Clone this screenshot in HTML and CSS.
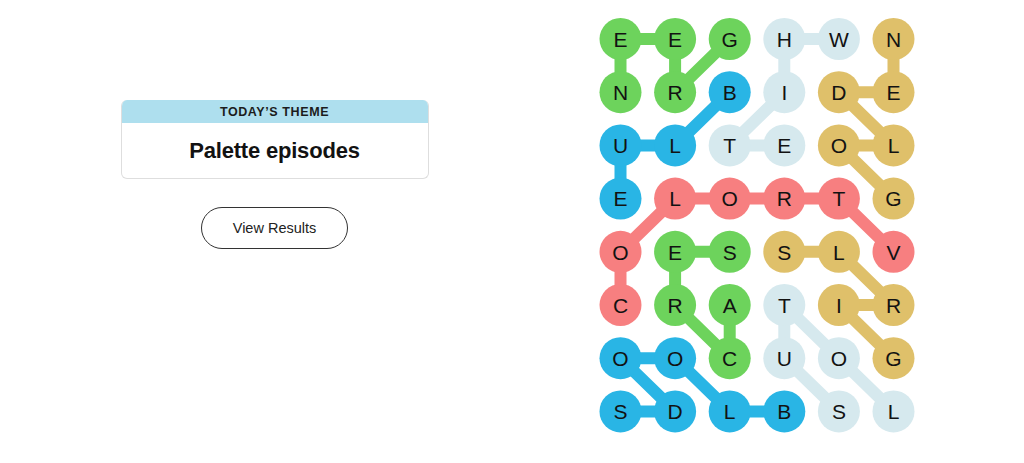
FILE: index.html
```html
<!Doctype html>
<html lang="en">
<head>
	<meta charset="utf-8">
	<title>Strands</title>
	<link rel="stylesheet" href="styles.css">
</head>
<body>
	<div id="page">
		<div id="summary">
			<div class="theme-card">
				<div class="theme-head">TODAY&rsquo;S THEME</div>
				<div class="theme-body">Palette episodes</div>
			</div>
			<button class="results-btn">View Results</button>
		</div>

		<svg id="board" width="340" height="463" viewBox="0 0 340 463"></svg>
	</div>

	<script>

var Board = {
	letters : [
		"EEGHWN",
		"NRBIDE",
		"ULTEOL",
		"ELORTG",
		"OESSLV",
		"CRATIR",
		"OOCUOG",
		"SDLBSL"
	],
	x0 : 30.5, y0 : 39,
	dx : 54.6, dy : 53.2,
	radius : 21
};

var colors = {
	green : "#6dd35c",
	blue : "#29b5e5",
	pale : "#d6e9ee",
	gold : "#dfc06a",
	red : "#f77f80"
};

// each found word, as the cells it runs through
var words = [
	{ color : "green", cells : [[0,2],[1,1],[0,1],[0,0],[1,0]] },
	{ color : "blue",  cells : [[1,2],[2,1],[2,0],[3,0]] },
	{ color : "pale",  cells : [[0,4],[0,3],[1,3],[2,2],[2,3]] },
	{ color : "gold",  cells : [[3,5],[2,4],[2,5],[1,4],[1,5],[0,5]] },
	{ color : "red",   cells : [[5,0],[4,0],[3,1],[3,2],[3,3],[3,4],[4,5]] },
	{ color : "green", cells : [[5,2],[6,2],[5,1],[4,1],[4,2]] },
	{ color : "gold",  cells : [[6,5],[5,4],[5,5],[4,4],[4,3]] },
	{ color : "blue",  cells : [[7,3],[7,2],[6,1],[6,0],[7,1],[7,0]] },
	{ color : "pale",  cells : [[7,5],[6,4],[5,3],[6,3],[7,4]] }
];

var NS = "http://www.w3.org/2000/svg";

function cx(col) { return Board.x0 + col * Board.dx; }
function cy(row) { return Board.y0 + row * Board.dy; }

function el(name, attrs) {
	var node = document.createElementNS(NS, name);
	for (var k in attrs) {
		node.setAttribute(k, attrs[k]);
	}
	return node;
}

function drawBoard() {
	var svg = document.getElementById("board");
	var lines = el("g", {});
	var dots = el("g", {});
	svg.appendChild(lines);
	svg.appendChild(dots);

	words.forEach(function(w) {
		var pts = w.cells.map(function(c) {
			return cx(c[1]) + "," + cy(c[0]);
		}).join(" ");

		lines.appendChild(el("polyline", {
			points : pts, fill : "none", stroke : colors[w.color],
			"stroke-width" : 12, "stroke-linejoin" : "round"
		}));

		w.cells.forEach(function(c) {
			dots.appendChild(el("circle", {
				cx : cx(c[1]), cy : cy(c[0]), r : Board.radius,
				fill : colors[w.color]
			}));
			var t = el("text", {
				x : cx(c[1]), y : cy(c[0]) + 7.8, "class" : "letter"
			});
			t.textContent = Board.letters[c[0]].charAt(c[1]);
			dots.appendChild(t);
		});
	});
}

drawBoard();

	</script>
</body>
</html>
```

FILE: styles.css
```css
html, body {
	margin: 0;
	padding: 0;
	background: #fff;
	font-family: "Liberation Sans", Arial, sans-serif;
	color: #121212;
}

#page {
	display: flex;
	width: 1024px;
	height: 463px;
}

#summary {
	width: 549px;
	display: flex;
	flex-direction: column;
	align-items: center;
	padding-top: 100px;
}

.theme-card {
	width: 308px;
	border-radius: 6px;
	overflow: hidden;
	box-sizing: border-box;
	border: 1px solid #dedede;
	border-top: none;
}

.theme-head {
	height: 23px;
	line-height: 24px;
	background: #aedfee;
	text-align: center;
	font-size: 12.5px;
	font-weight: bold;
	letter-spacing: 0.6px;
	color: #1c1c1c;
}

.theme-body {
	height: 55px;
	line-height: 55px;
	text-align: center;
	font-size: 22px;
	font-weight: bold;
	letter-spacing: -0.2px;
}

.results-btn {
	margin-top: 28px;
	width: 147px;
	height: 42px;
	border: 1.5px solid #333;
	border-radius: 21px;
	background: #fff;
	font-family: inherit;
	font-size: 14.5px;
	color: #222;
	padding: 0;
}

#board {
	margin-left: 41px;
	display: block;
}

#board .letter {
	font-family: "Liberation Sans", Arial, sans-serif;
	font-size: 21px;
	text-anchor: middle;
	fill: #121212;
}
```
